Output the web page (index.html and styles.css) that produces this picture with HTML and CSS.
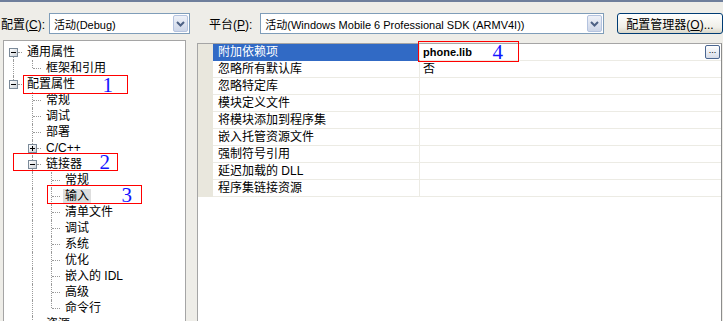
FILE: index.html
```html
<!DOCTYPE html>
<html lang="zh-CN">
  <head>
    <meta charset="UTF-8" />
    <title>属性页 - 链接器 - 输入</title>
    <link rel="stylesheet" href="styles.css">
  </head>
  <body>
    <div class="toolbar">
      <span class="label">配置(<u>C</u>):</span>
      <div class="combo combo-config">
        <span class="combo-text">活动(Debug)</span>
        <span class="combo-drop"><svg width="9" height="6" viewBox="0 0 9 6"><path d="M1 1 L4.5 4.5 L8 1" fill="none" stroke="#4d6185" stroke-width="2"/></svg></span>
      </div>
      <span class="label label-platform">平台(<u>P</u>):</span>
      <div class="combo combo-platform">
        <span class="combo-text">活动(Windows Mobile 6 Professional SDK (ARMV4I))</span>
        <span class="combo-drop"><svg width="9" height="6" viewBox="0 0 9 6"><path d="M1 1 L4.5 4.5 L8 1" fill="none" stroke="#4d6185" stroke-width="2"/></svg></span>
      </div>
      <button class="btn">配置管理器(<u>O</u>)...</button>
    </div>

    <div class="main">
      <!-- left tree of property pages -->
      <div class="tree">
        <div class="node"><span class="g box down"><i class="eb"></i></span><span class="text">通用属性</span></div>
        <div class="node"><span class="g pipe"></span><span class="g end"></span><span class="text">框架和引用</span></div>
        <div class="node"><span class="g box up"><i class="eb"></i></span><span class="text">配置属性</span></div>
        <div class="node"><span class="g"></span><span class="g tee"></span><span class="text">常规</span></div>
        <div class="node"><span class="g"></span><span class="g tee"></span><span class="text">调试</span></div>
        <div class="node"><span class="g"></span><span class="g tee"></span><span class="text">部署</span></div>
        <div class="node"><span class="g"></span><span class="g box up down"><i class="eb plus"></i></span><span class="text">C/C++</span></div>
        <div class="node"><span class="g"></span><span class="g box up down"><i class="eb"></i></span><span class="text">链接器</span></div>
        <div class="node"><span class="g"></span><span class="g pipe"></span><span class="g tee"></span><span class="text">常规</span></div>
        <div class="node"><span class="g"></span><span class="g pipe"></span><span class="g tee"></span><span class="text current">输入</span></div>
        <div class="node"><span class="g"></span><span class="g pipe"></span><span class="g tee"></span><span class="text">清单文件</span></div>
        <div class="node"><span class="g"></span><span class="g pipe"></span><span class="g tee"></span><span class="text">调试</span></div>
        <div class="node"><span class="g"></span><span class="g pipe"></span><span class="g tee"></span><span class="text">系统</span></div>
        <div class="node"><span class="g"></span><span class="g pipe"></span><span class="g tee"></span><span class="text">优化</span></div>
        <div class="node"><span class="g"></span><span class="g pipe"></span><span class="g tee"></span><span class="text">嵌入的 IDL</span></div>
        <div class="node"><span class="g"></span><span class="g pipe"></span><span class="g tee"></span><span class="text">高级</span></div>
        <div class="node"><span class="g"></span><span class="g pipe"></span><span class="g end"></span><span class="text">命令行</span></div>
        <div class="node"><span class="g"></span><span class="g tee"></span><span class="text">资源</span></div>
      </div>

      <!-- property grid -->
      <div class="grid">
        <div class="row selected">
          <div class="margin"></div>
          <div class="name">附加依赖项</div>
          <div class="value"><b>phone.lib</b><span class="more">...</span></div>
        </div>
        <div class="row"><div class="margin"></div><div class="name">忽略所有默认库</div><div class="value">否</div></div>
        <div class="row"><div class="margin"></div><div class="name">忽略特定库</div><div class="value"></div></div>
        <div class="row"><div class="margin"></div><div class="name">模块定义文件</div><div class="value"></div></div>
        <div class="row"><div class="margin"></div><div class="name">将模块添加到程序集</div><div class="value"></div></div>
        <div class="row"><div class="margin"></div><div class="name">嵌入托管资源文件</div><div class="value"></div></div>
        <div class="row"><div class="margin"></div><div class="name">强制符号引用</div><div class="value"></div></div>
        <div class="row"><div class="margin"></div><div class="name">延迟加载的 DLL</div><div class="value"></div></div>
        <div class="row"><div class="margin"></div><div class="name">程序集链接资源</div><div class="value"></div></div>
      </div>
    </div>

    <!-- red callouts drawn over the dialog -->
    <div class="mark mark-1"><span>1</span></div>
    <div class="mark mark-2"><span>2</span></div>
    <div class="mark mark-3"><span>3</span></div>
    <div class="mark mark-4"><span>4</span></div>
  </body>
</html>
```

FILE: styles.css
```css
body {
  margin: 0;
  background-color: #eeede8;
  font-family: "Liberation Sans", "Noto Sans CJK SC", sans-serif;
  font-size: 12px;
  color: #000;
  height: 321px;
  overflow: hidden;
  border-top: 2px solid #6f7f9c;
  box-sizing: border-box;
}

u {
  text-decoration: underline;
}

/* top bar */
.toolbar {
  display: flex;
  align-items: center;
  height: 21px;
  padding: 11px 0 0 1px;
}

.label {
  white-space: nowrap;
}

.label-platform {
  margin-left: 19px;
}

.combo {
  display: flex;
  align-items: center;
  justify-content: space-between;
  height: 21px;
  box-sizing: border-box;
  border: 1px solid #7f9db9;
  background-color: #fff;
  padding: 0 1px 0 4px;
  font-size: 11px;
}

.combo-config {
  width: 141px;
  margin-left: 4px;
}

.combo-platform {
  width: 344px;
  margin-left: 8px;
}

.combo-text {
  white-space: nowrap;
}

.combo-drop {
  display: flex;
  align-items: center;
  justify-content: center;
  width: 15px;
  height: 17px;
  box-sizing: border-box;
  border: 1px solid #b4c3df;
  border-radius: 2px;
  background: linear-gradient(#eef1f8, #cdd6e8);
}

.btn {
  margin-left: 13px;
  width: 106px;
  height: 21px;
  padding: 0;
  border: 1px solid #003c74;
  border-radius: 3px;
  background: linear-gradient(#ffffff, #f0efe8 70%, #d9d6c8);
  font-family: "Liberation Sans", "Noto Sans CJK SC", sans-serif;
  font-size: 12px;
  color: #000;
}

/* main area */
.main {
  display: flex;
  align-items: flex-start;
  padding: 6px 0 0 3px;
}

.tree {
  width: 183px;
  height: 290px;
  box-sizing: border-box;
  border: 1px solid #a5a5a5;
  background-color: #fff;
  padding-top: 3px;
}

.node {
  display: flex;
  align-items: center;
  height: 16px;
  line-height: 16px;
  white-space: nowrap;
}

.text {
  margin-left: 2px;
  padding: 0 2px;
  line-height: 15px;
}

.text.current {
  background-color: #dedede;
}

/* tree guide cells */
.g {
  flex: none;
  position: relative;
  width: 19px;
  height: 16px;
}

.pipe::before,
.tee::before,
.end::before,
.box.up::before,
.box.down::before {
  content: "";
  position: absolute;
  left: 9px;
  top: 0;
  height: 16px;
  border-left: 1px dotted #9a9a9a;
}

.end::before,
.box.up::before {
  height: 8px;
}

.box.down::before {
  top: 8px;
  height: 8px;
}

.box.up.down::before {
  top: 0;
  height: 16px;
}

.tee::after,
.end::after,
.box::after {
  content: "";
  position: absolute;
  left: 10px;
  top: 8px;
  width: 8px;
  border-top: 1px dotted #9a9a9a;
}

.box::after {
  left: 14px;
  width: 4px;
}

.eb {
  position: absolute;
  left: 5px;
  top: 4px;
  width: 9px;
  height: 9px;
  box-sizing: border-box;
  border: 1px solid #7b8a99;
  background: linear-gradient(135deg, #ffffff, #cdd2d8);
  z-index: 1;
}

.eb::before {
  content: "";
  position: absolute;
  left: 1px;
  top: 3px;
  width: 5px;
  height: 1px;
  background-color: #000;
}

.eb.plus::after {
  content: "";
  position: absolute;
  left: 3px;
  top: 1px;
  width: 1px;
  height: 5px;
  background-color: #000;
}

/* property grid */
.grid {
  margin: 3px 0 0 11px;
  width: 525px;
  height: 290px;
  box-sizing: border-box;
  border: 1px solid #a5a5a5;
  border-right-color: #8c8c8c;
  background-color: #fff;
}

.row {
  display: flex;
  height: 17px;
}

.margin {
  width: 15px;
  background-color: #e9e7dd;
}

.name,
.value {
  box-sizing: border-box;
  border-bottom: 1px solid #ecebe4;
  line-height: 16px;
  white-space: nowrap;
}

.name {
  width: 207px;
  padding-left: 5px;
  border-right: 1px solid #ecebe4;
}

.value {
  flex: 1;
  display: flex;
  justify-content: space-between;
  align-items: center;
  padding-left: 3px;
}

.selected .name {
  background-color: #316ac5;
  color: #fff;
  border-bottom-color: #316ac5;
}

.value b {
  font-size: 11px;
}

.more {
  width: 15px;
  height: 14px;
  margin-right: 1px;
  box-sizing: border-box;
  border: 1px solid #4b6690;
  border-radius: 2px;
  background: linear-gradient(#ffffff, #d6dce8);
  font-size: 9px;
  line-height: 9px;
  text-align: center;
  color: #000;
}

/* annotation boxes */
.mark {
  position: absolute;
  box-sizing: border-box;
  border: 1px solid #ff0000;
  display: flex;
  align-items: center;
  justify-content: flex-end;
  font-family: "Liberation Serif", serif;
  font-size: 21px;
  line-height: 18px;
  color: #1414ff;
}

.mark-1 {
  left: 23px;
  top: 75px;
  width: 105px;
  height: 19px;
  padding-right: 14px;
}

.mark-2 {
  left: 13px;
  top: 153px;
  width: 105px;
  height: 18px;
  padding-right: 7px;
}

.mark-3 {
  left: 47px;
  top: 185px;
  width: 95px;
  height: 19px;
  padding-right: 9px;
}

.mark-4 {
  left: 418px;
  top: 41px;
  width: 101px;
  height: 21px;
  padding-right: 15px;
}
```
